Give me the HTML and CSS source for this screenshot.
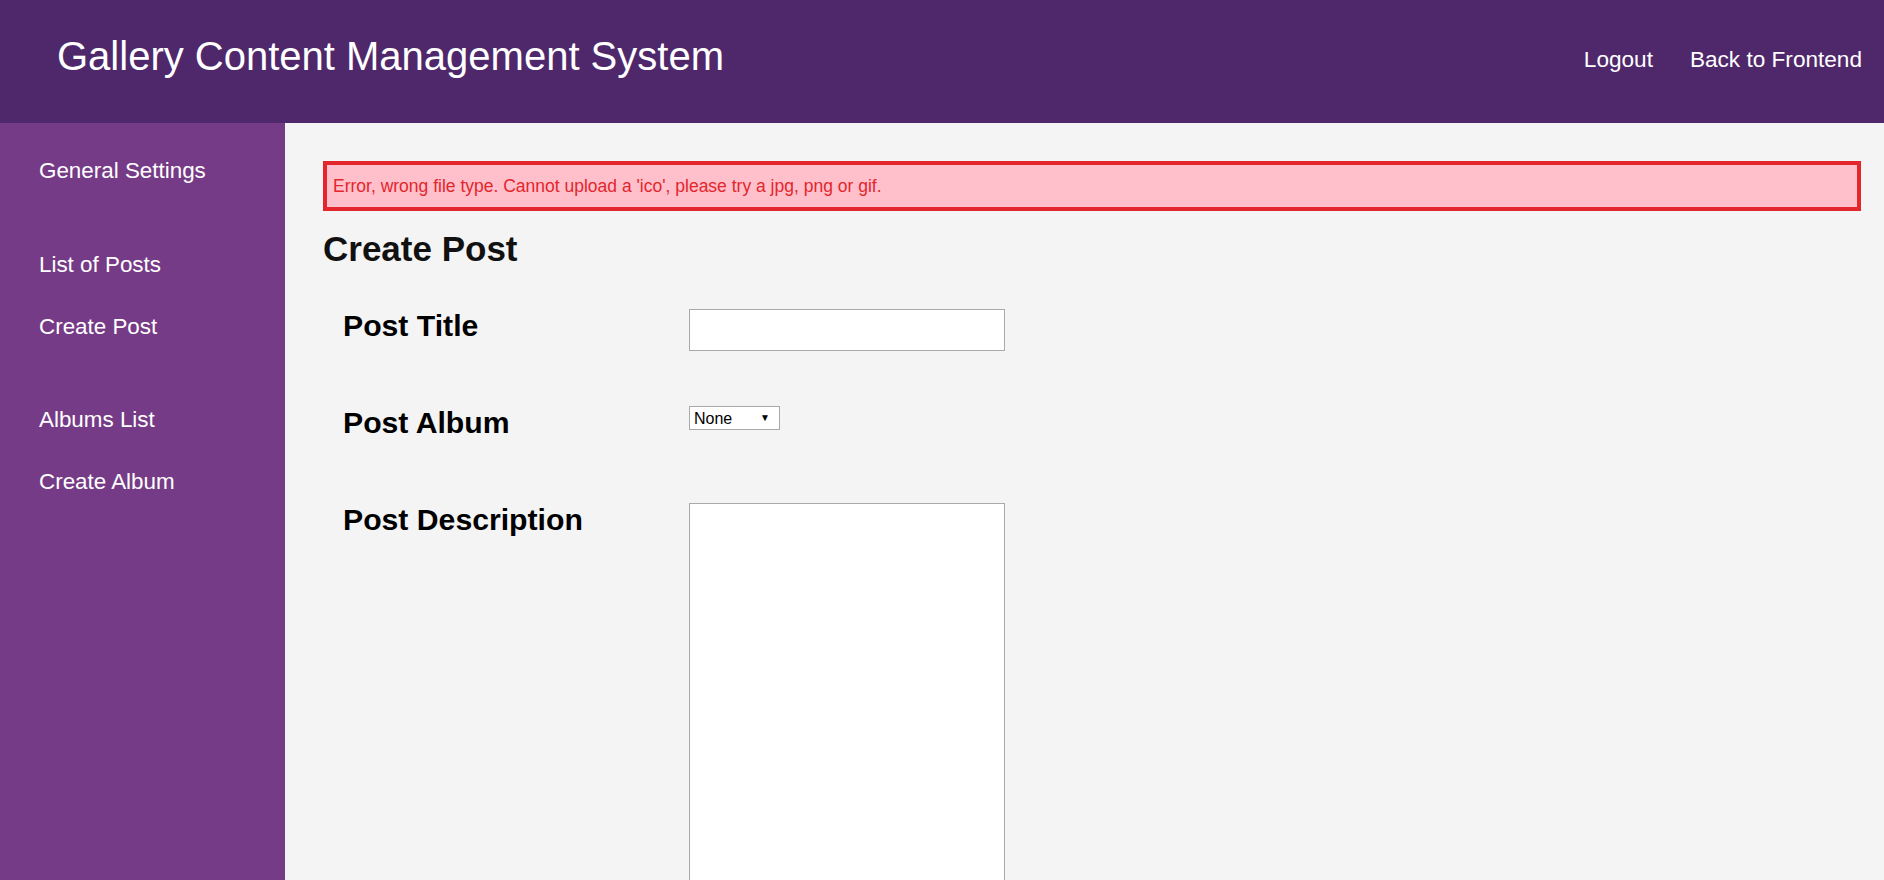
FILE: index.html
```html
<!DOCTYPE html>
<html lang="en">
<head>
<meta charset="utf-8">
<title>Gallery Content Management System</title>
<link rel="stylesheet" href="styles.css">
</head>
<body>
<header class="topbar">
  <div class="brand">Gallery Content Management System</div>
  <nav class="topnav">
    <a href="#">Logout</a>
    <a href="#">Back to Frontend</a>
  </nav>
</header>
<div class="layout">
  <aside class="sidebar">
    <ul class="menu-group">
      <li><a href="#">General Settings</a></li>
    </ul>
    <ul class="menu-group">
      <li><a href="#">List of Posts</a></li>
      <li><a href="#">Create Post</a></li>
    </ul>
    <ul class="menu-group">
      <li><a href="#">Albums List</a></li>
      <li><a href="#">Create Album</a></li>
    </ul>
  </aside>
  <main class="content">
    <p class="error">Error, wrong file type. Cannot upload a 'ico', please try a jpg, png or gif.</p>
    <h1 class="page-title">Create Post</h1>
    <form class="post-form">
      <div class="form-row">
        <label class="form-label" for="title">Post Title</label>
        <input class="text-input" id="title" type="text">
      </div>
      <div class="form-row">
        <label class="form-label" for="album">Post Album</label>
        <span class="select-wrap">
          <select class="select-input" id="album">
            <option>None</option>
          </select>
          <span class="select-arrow">&#9660;</span>
        </span>
      </div>
      <div class="form-row">
        <label class="form-label" for="desc">Post Description</label>
        <textarea class="textarea-input" id="desc"></textarea>
      </div>
    </form>
  </main>
</div>
</body>
</html>
```
FILE: styles.css
```css
html, body {
  margin: 0;
  padding: 0;
}
body {
  font-family: "Liberation Sans", Arial, sans-serif;
  background: #f4f4f4;
  height: 880px;
  overflow: hidden;
  display: flex;
  flex-direction: column;
}
a {
  color: inherit;
  text-decoration: none;
}
.topbar {
  background: #4f286b;
  color: #ffffff;
  height: 123px;
  box-sizing: border-box;
  display: flex;
  justify-content: space-between;
  align-items: flex-start;
  padding: 0 22px 0 57px;
  flex-shrink: 0;
}
.brand {
  font-size: 40px;
  line-height: 46px;
  margin-top: 33px;
}
.topnav {
  display: flex;
  gap: 37px;
  font-size: 22.6px;
  line-height: 26px;
  margin-top: 47px;
}
.layout {
  display: flex;
  flex: 1;
  min-height: 0;
}
.sidebar {
  width: 285px;
  flex-shrink: 0;
  background: #763b86;
  color: #ffffff;
  padding: 17px 0 0 39px;
  box-sizing: border-box;
}
.menu-group {
  list-style: none;
  margin: 0 0 31.5px 0;
  padding: 0;
}
.menu-group li {
  font-size: 22.4px;
  line-height: 26px;
  padding: 18px 0;
}
.content {
  flex: 1;
  padding: 38px 23px 0 38px;
  overflow: hidden;
}
.error {
  margin: 0;
  background: #ffc0cb;
  border: 4px solid #e3262b;
  color: #e3262b;
  font-size: 17.5px;
  line-height: 20px;
  padding: 11px 6px;
}
.page-title {
  margin: 18px 0 0 0;
  font-size: 35px;
  line-height: 40px;
  font-weight: bold;
  color: #111111;
}
.post-form {
  margin-top: 40px;
  padding-left: 20px;
}
.form-row {
  display: flex;
  align-items: flex-start;
  min-height: 97px;
}
.form-label {
  width: 346px;
  flex-shrink: 0;
  font-size: 30.2px;
  line-height: 34px;
  font-weight: bold;
  color: #000000;
}
.text-input {
  width: 316px;
  height: 42px;
  box-sizing: border-box;
  border: 1px solid #a9a9a9;
  background: #ffffff;
  margin: 0;
  padding: 2px 4px;
  font-family: "Liberation Sans", Arial, sans-serif;
  font-size: 16px;
}
.select-wrap {
  position: relative;
  display: inline-block;
  margin-top: 0;
}
.select-input {
  appearance: none;
  -webkit-appearance: none;
  width: 91px;
  height: 24px;
  box-sizing: border-box;
  border: 1px solid #a9a9a9;
  border-radius: 0;
  background: #ffffff;
  color: #000000;
  font-family: "Liberation Sans", Arial, sans-serif;
  font-size: 16px;
  padding: 0 0 0 4px;
  margin: 0;
}
.select-arrow {
  position: absolute;
  right: 10px;
  top: 7px;
  font-size: 10px;
  line-height: 10px;
  color: #000000;
  pointer-events: none;
}
.textarea-input {
  width: 316px;
  height: 420px;
  box-sizing: border-box;
  border: 1px solid #a9a9a9;
  background: #ffffff;
  margin: 0;
  resize: none;
  font-family: "Liberation Sans", Arial, sans-serif;
}
```
